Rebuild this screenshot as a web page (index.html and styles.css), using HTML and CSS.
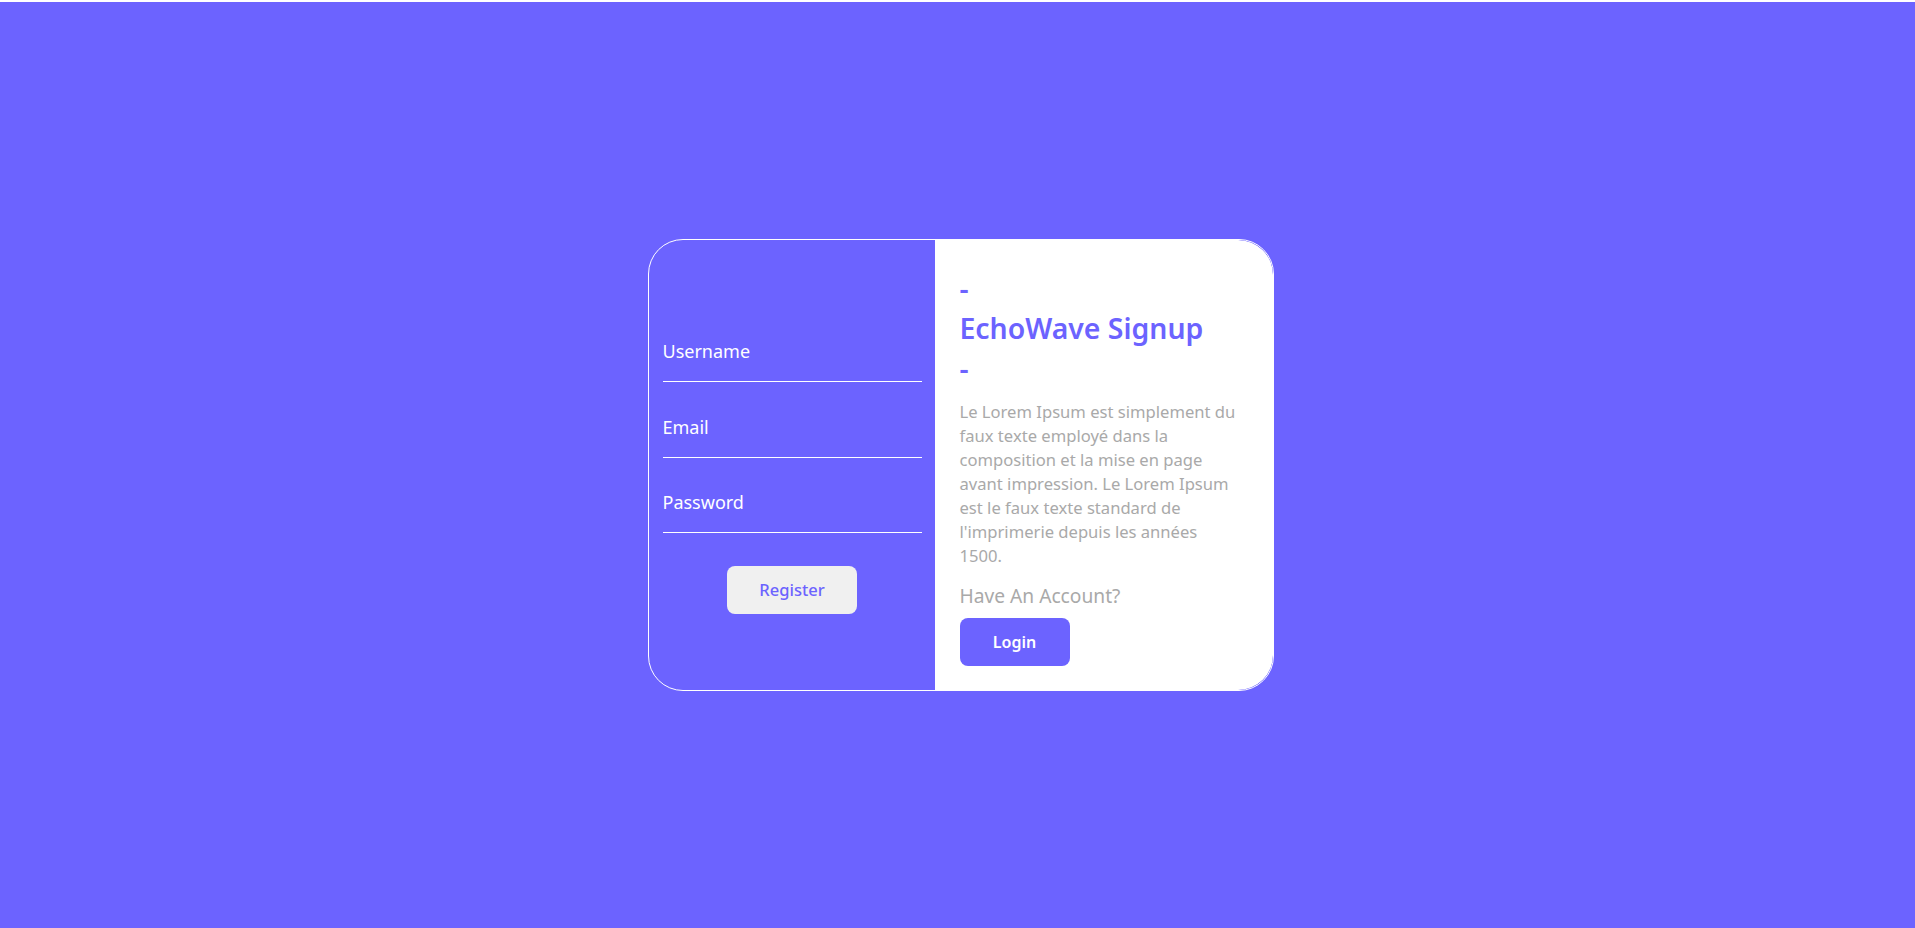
FILE: index.html
```html
<!DOCTYPE html>
<html lang="fr">
<head>
<meta charset="utf-8">
<title>EchoWave Signup</title>
<link rel="stylesheet" href="styles.css">
</head>
<body>
<main class="page">
  <section class="card">
    <form class="form-panel">
      <div class="field"><input class="field-input" type="text" placeholder="Username"></div>
      <div class="field"><input class="field-input" type="email" placeholder="Email"></div>
      <div class="field"><input class="field-input" type="password" placeholder="Password"></div>
      <button class="btn-register" type="button">Register</button>
    </form>
    <div class="info-panel">
      <h1 class="title"><span class="dash">-</span><span>EchoWave Signup</span><span class="dash">-</span></h1>
      <p class="desc">Le Lorem Ipsum est simplement du<br>faux texte employé dans la<br>composition et la mise en page<br>avant impression. Le Lorem Ipsum<br>est le faux texte standard de<br>l'imprimerie depuis les années<br>1500.</p>
      <p class="have">Have An Account?</p>
      <button class="btn-login" type="button">Login</button>
    </div>
  </section>
</main>
</body>
</html>
```
FILE: styles.css
```css
* { box-sizing: border-box; }
html, body { margin: 0; padding: 0; }
body {
  background: #ffffff;
  font-family: "Noto Sans", "Open Sans", sans-serif;
  padding-top: 2px;
}
.page {
  height: 926px;
  background: #6c63ff;
  display: flex;
  align-items: center;
  justify-content: center;
  padding-left: 6px;
}
.card {
  display: flex;
  width: 626px;
  height: 452px;
  border: 1px solid #ffffff;
  border-radius: 35px;
  overflow: hidden;
}
.form-panel {
  width: 286px;
  padding: 85px 13px 0 14px;
  display: flex;
  flex-direction: column;
  align-items: stretch;
}
.field {
  height: 57px;
  border-bottom: 1px solid #ffffff;
  margin-bottom: 18.5px;
  padding-bottom: 18px;
  display: flex;
  align-items: flex-end;
}
.field-input {
  flex: 1;
  background: transparent;
  border: none;
  outline: none;
  padding: 0;
  color: #ffffff;
  font-family: inherit;
  font-size: 18px;
  height: 24px;
  line-height: 24px;
}
.field-input::placeholder { color: #ffffff; opacity: 1; }
.btn-register {
  align-self: center;
  margin-top: 14px;
  width: 130px;
  height: 48px;
  border: none;
  border-radius: 8px;
  background: #f0f0f0;
  color: #6c63ff;
  font-family: inherit;
  font-size: 16.5px;
  font-weight: 500;
}
.info-panel {
  flex: 1;
  background: #ffffff;
  border-radius: 0 35px 35px 0;
  padding: 28px 20px 0 25px;
}
.title {
  margin: 0;
  display: flex;
  flex-direction: column;
  color: #6c63ff;
  font-size: 28.4px;
  font-weight: 600;
  line-height: 40px;
}
.desc {
  margin: 12px 0 0;
  color: #a9a9a9;
  font-size: 16.6px;
  line-height: 24px;
  white-space: nowrap;
}
.have {
  margin: 16px 0 0;
  color: #a9a9a9;
  font-size: 19.2px;
  line-height: 24px;
}
.btn-login {
  margin-top: 10px;
  width: 110px;
  height: 48px;
  border: none;
  border-radius: 8px;
  background: #6c63ff;
  color: #ffffff;
  font-family: inherit;
  font-size: 16px;
  font-weight: 600;
}
```
